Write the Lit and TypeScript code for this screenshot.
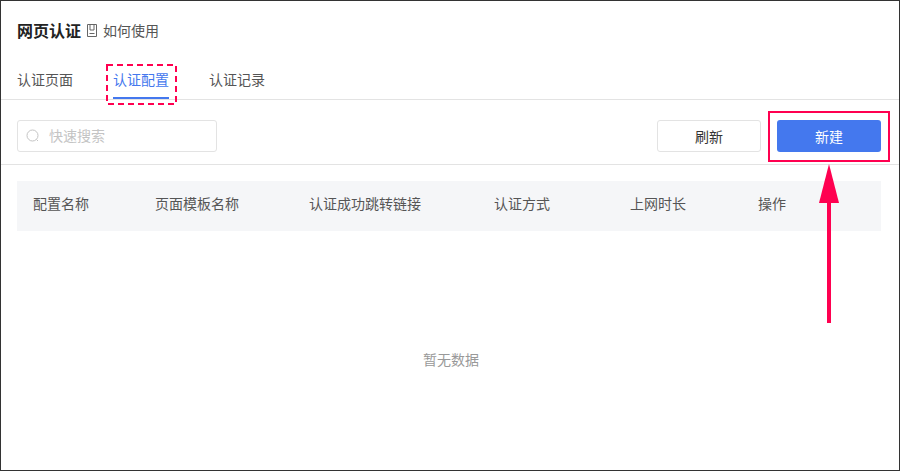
import { LitElement, html, css, svg } from "lit";
import { customElement } from "lit/decorators.js";

const COLS = [
  { label: "配置名称", w: 122 },
  { label: "页面模板名称", w: 154 },
  { label: "认证成功跳转链接", w: 185 },
  { label: "认证方式", w: 136 },
  { label: "上网时长", w: 128 },
  { label: "操作", w: 107 },
];

@customElement("app-root")
export class AppRoot extends LitElement {
  static styles = css`
    :host {
      display: block;
      width: 900px;
      height: 471px;
      position: relative;
      overflow: hidden;
      background: #fff;
      font-family: "Noto Sans CJK SC", "Liberation Sans", sans-serif;
      font-size: 14px;
      color: #333;
    }
    .frame {
      box-sizing: border-box;
      width: 900px;
      height: 471px;
      border: 1px solid #333;
      display: flex;
      flex-direction: column;
    }
    .head {
      display: flex;
      align-items: center;
      height: 20px;
      margin: 19px 0 0 16px;
    }
    .title {
      font-size: 16px;
      font-weight: 700;
      color: #222;
      line-height: 20px;
    }
    .help {
      display: flex;
      align-items: center;
      margin-left: 6px;
      gap: 6px;
      color: #555;
      line-height: 20px;
    }
    .help svg { display: block; }
    .tabs {
      display: flex;
      gap: 40px;
      padding-left: 16px;
      margin-top: 20px;
      height: 39px;
      border-bottom: 1px solid #e3e3e3;
      color: #555;
    }
    .tab {
      height: 39px;
      box-sizing: border-box;
      line-height: 20px;
      padding-top: 9px;
      position: relative;
    }
    .tab.active { color: #4478ee; border-bottom: 2px solid #4478ee; }
    .toolbar {
      display: flex;
      align-items: center;
      margin: 20px 18px 0 16px;
      padding-bottom: 12px;
      gap: 16px;
    }
    .search {
      box-sizing: border-box;
      width: 200px;
      height: 32px;
      border: 1px solid #e3e3e3;
      border-radius: 3px;
      display: flex;
      align-items: center;
      padding-left: 8px;
      gap: 10px;
      color: #c4c4c4;
    }
    .search svg { display: block; }
    .search span { line-height: 20px; padding-bottom: 3px; }
    .spacer { flex: 1; }
    .btn {
      box-sizing: border-box;
      width: 104px;
      height: 32px;
      border-radius: 3px;
      display: flex;
      align-items: center;
      justify-content: center;
    }
    .btn.plain { border: 1px solid #e3e3e3; color: #333; }
    .btn.primary { background: #4478ee; color: #fff; }
    .rule {
      height: 1px;
      background: #e3e3e3;
    }
    .table-head {
      box-sizing: border-box;
      display: flex;
      align-items: center;
      height: 50px;
      padding-bottom: 6px;
      margin: 16px 18px 0 16px;
      background: #f5f6f8;
      color: #555;
    }
    .cell {
      box-sizing: border-box;
      padding-left: 16px;
      flex: none;
    }
    .empty {
      text-align: center;
      color: #999;
      margin-top: 118px;
      line-height: 20px;
      padding-left: 2px;
    }
    .overlay {
      position: absolute;
      left: 0;
      top: 0;
      pointer-events: none;
    }
  `;

  render() {
    return html`
      <div class="frame">
        <div class="head">
          <span class="title">网页认证</span>
          <span class="help">
            <svg width="10" height="13" viewBox="0 0 10 13" fill="none" stroke="#666" stroke-width="1">
              <path d="M.5.5h9v12h-9z" />
              <path d="M3 .5v5.5h4V.5M2.5 9.5h5" />
            </svg>
            如何使用
          </span>
        </div>
        <div class="tabs">
          <div class="tab">认证页面</div>
          <div class="tab active">认证配置</div>
          <div class="tab">认证记录</div>
        </div>
        <div class="toolbar">
          <div class="search">
            <svg width="13" height="14" viewBox="0 0 13 14" fill="none" stroke="#c4c4c4" stroke-width="1">
              <circle cx="6.5" cy="6.5" r="5.5" />
              <path d="M10.5 10.5l1.5 1.5" />
            </svg>
            <span>快速搜索</span>
          </div>
          <div class="spacer"></div>
          <div class="btn plain">刷新</div>
          <div class="btn primary">新建</div>
        </div>
        <div class="rule"></div>
        <div class="table-head">
          ${COLS.map((c) => html`<div class="cell" style="width:${c.w}px">${c.label}</div>`)}
        </div>
        <div class="empty">暂无数据</div>
      </div>
      <svg class="overlay" width="900" height="471" viewBox="0 0 900 471">
        ${svg`
          <rect x="107" y="65" width="69" height="39" fill="none" stroke="#ff0050" stroke-width="2" stroke-dasharray="6 4" />
          <rect x="769" y="112" width="120" height="49" fill="none" stroke="#ff0050" stroke-width="2" />
          <path d="M819 203L829 164L839 203Z" fill="#ff0050" />
          <rect x="827" y="203" width="4" height="120" fill="#ff0050" />
        `}
      </svg>
    `;
  }
}
